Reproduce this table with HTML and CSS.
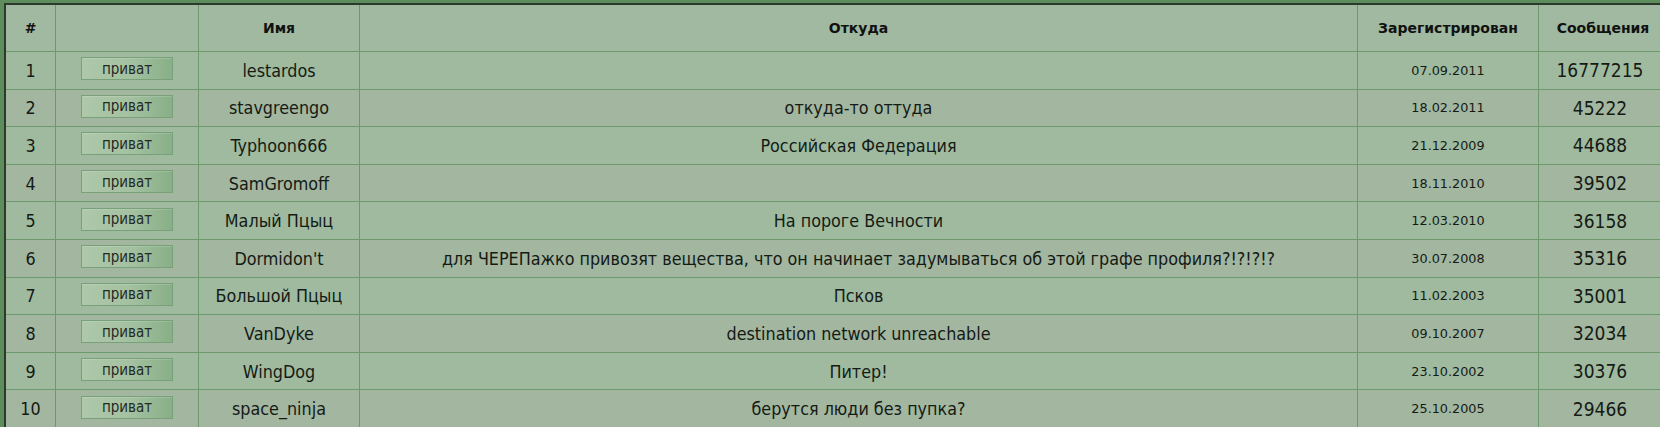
FILE: index.html
```html
<!DOCTYPE html>
<html lang="ru">
<head>
<meta charset="utf-8">
<title>Пользователи</title>
<link rel="stylesheet" href="styles.css">
</head>
<body>
<div class="page">
  <div class="users" role="table">
    <div class="row head" role="row">
      <div class="c c-num">#</div>
      <div class="c"></div>
      <div class="c">Имя</div>
      <div class="c">Откуда</div>
      <div class="c">Зарегистрирован</div>
      <div class="c">Сообщения</div>
    </div>
    <div class="row odd"><div class="c c-num">1</div><div class="c"><span class="btn">приват</span></div><div class="c">lestardos</div><div class="c"></div><div class="c c-date">07.09.2011</div><div class="c c-cnt">16777215</div></div>
    <div class="row even"><div class="c c-num">2</div><div class="c"><span class="btn">приват</span></div><div class="c">stavgreengo</div><div class="c">откуда-то оттуда</div><div class="c c-date">18.02.2011</div><div class="c c-cnt">45222</div></div>
    <div class="row odd"><div class="c c-num">3</div><div class="c"><span class="btn">приват</span></div><div class="c">Typhoon666</div><div class="c">Российская Федерация</div><div class="c c-date">21.12.2009</div><div class="c c-cnt">44688</div></div>
    <div class="row even"><div class="c c-num">4</div><div class="c"><span class="btn">приват</span></div><div class="c">SamGromoff</div><div class="c"></div><div class="c c-date">18.11.2010</div><div class="c c-cnt">39502</div></div>
    <div class="row odd"><div class="c c-num">5</div><div class="c"><span class="btn">приват</span></div><div class="c">Малый Пцыц</div><div class="c">На пороге Вечности</div><div class="c c-date">12.03.2010</div><div class="c c-cnt">36158</div></div>
    <div class="row even"><div class="c c-num">6</div><div class="c"><span class="btn">приват</span></div><div class="c">Dormidon't</div><div class="c">для ЧЕРЕПажко привозят вещества, что он начинает задумываться об этой графе профиля?!?!?!?</div><div class="c c-date">30.07.2008</div><div class="c c-cnt">35316</div></div>
    <div class="row odd"><div class="c c-num">7</div><div class="c"><span class="btn">приват</span></div><div class="c">Большой Пцыц</div><div class="c">Псков</div><div class="c c-date">11.02.2003</div><div class="c c-cnt">35001</div></div>
    <div class="row even"><div class="c c-num">8</div><div class="c"><span class="btn">приват</span></div><div class="c">VanDyke</div><div class="c">destination network unreachable</div><div class="c c-date">09.10.2007</div><div class="c c-cnt">32034</div></div>
    <div class="row odd"><div class="c c-num">9</div><div class="c"><span class="btn">приват</span></div><div class="c">WingDog</div><div class="c">Питер!</div><div class="c c-date">23.10.2002</div><div class="c c-cnt">30376</div></div>
    <div class="row even"><div class="c c-num">10</div><div class="c"><span class="btn">приват</span></div><div class="c">space_ninja</div><div class="c">берутся люди без пупка?</div><div class="c c-date">25.10.2005</div><div class="c c-cnt">29466</div></div>
  </div>
</div>
</body>
</html>
```

FILE: styles.css
```css
html, body {
  margin: 0;
  padding: 0;
  overflow: hidden;
  background: #5d8d5d;
}

.page {
  padding: 3px 0 0 4px;
}

.users {
  width: 1663px;
  border-top: 2px solid #2c3a2c;
  border-left: 2px solid #2c3a2c;
  display: grid;
  grid-template-columns: 50px 143px 161px 998px 181px 129px;
  font-family: "DejaVu Sans Condensed", "DejaVu Sans", sans-serif;
  font-stretch: condensed;
  font-size: 17.8px;
  color: #151a15;
}

.row {
  display: contents;
}

.c {
  box-sizing: border-box;
  border-right: 1px solid #6d9a6d;
  border-bottom: 1px solid #6d9a6d;
  display: flex;
  align-items: center;
  justify-content: center;
  text-align: center;
  height: 37.6px;
  white-space: nowrap;
}

.head .c {
  height: 47px;
  background: #a0b9a0;
  font-family: "DejaVu Sans", sans-serif;
  font-stretch: normal;
  font-weight: bold;
  font-size: 14px;
  color: #111;
}

.odd .c {
  background: #9fba9f;
}

.even .c {
  background: #a2b6a0;
}

.c-date {
  font-family: "DejaVu Sans", sans-serif;
  font-stretch: normal;
  font-size: 12.8px;
}

.c-cnt {
  font-size: 19px;
  padding-right: 6px;
}

.btn {
  box-sizing: border-box;
  width: 92px;
  height: 23px;
  margin-top: -3px;
  border: 1px solid #79a179;
  background: linear-gradient(to right, #aec8aa 0%, #a3c1a0 55%, #88af87 100%);
  box-shadow: inset 0 1px 0 rgba(255,255,255,0.15);
  color: #252a25;
  font-family: "DejaVu Sans Condensed", "DejaVu Sans", sans-serif;
  font-stretch: condensed;
  font-size: 15px;
  line-height: 20px;
  display: flex;
  align-items: center;
  justify-content: center;
}
```
